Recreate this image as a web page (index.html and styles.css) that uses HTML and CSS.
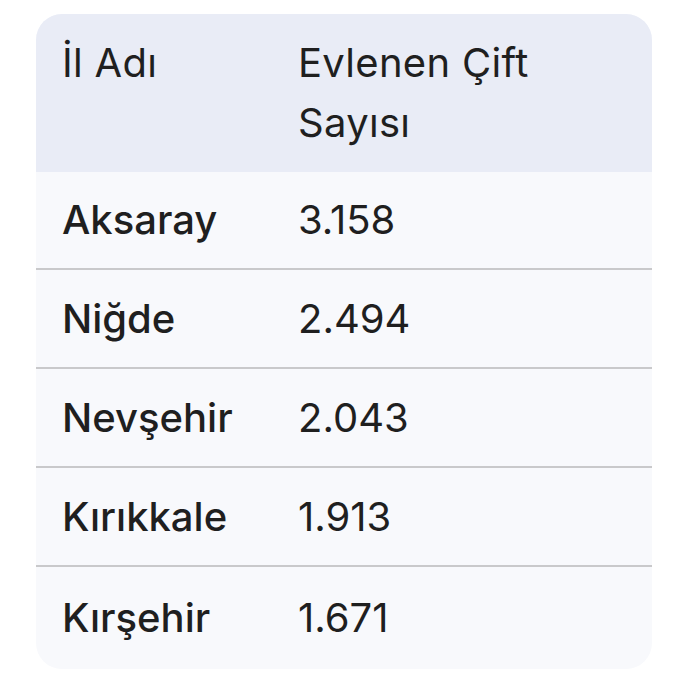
FILE: index.html
```html
<!DOCTYPE html>
<html lang="tr">
<head>
<meta charset="utf-8">
<link rel="stylesheet" href="styles.css">
</head>
<body>
<div class="card">
  <table class="data">
    <thead>
      <tr>
        <th class="c1">İl Adı</th>
        <th class="c2">Evlenen Çift Sayısı</th>
      </tr>
    </thead>
    <tbody>
      <tr><td class="c1 name">Aksaray</td><td class="c2">3.158</td></tr>
      <tr><td class="c1 name">Niğde</td><td class="c2">2.494</td></tr>
      <tr><td class="c1 name">Nevşehir</td><td class="c2">2.043</td></tr>
      <tr><td class="c1 name">Kırıkkale</td><td class="c2">1.913</td></tr>
      <tr><td class="c1 name">Kırşehir</td><td class="c2">1.671</td></tr>
    </tbody>
  </table>
</div>
</body>
</html>
```
FILE: styles.css
```css
html, body {
  margin: 0;
  padding: 0;
  background: #ffffff;
}
body {
  font-family: Inter, "Noto Sans", sans-serif;
  color: #1f1f1f;
}
.card {
  margin: 14px 48px 0 36px;
  width: 616px;
  border-radius: 26px;
  overflow: hidden;
  background: #f8f9fc;
}
.data {
  width: 100%;
  border-collapse: collapse;
  table-layout: fixed;
}
.data th {
  background: #e9ecf6;
  font-weight: 400;
  font-size: 40px;
  letter-spacing: 0.3px;
  line-height: 60px;
  text-align: left;
  vertical-align: top;
  padding: 19px 0 19px 0;
}
.data .c1 {
  width: 236px;
  padding-left: 26px;
}
.data th.c2 {
  padding-right: 60px;
}
.data td {
  font-size: 40px;
  line-height: 48px;
  height: 97px;
  padding: 0;
  vertical-align: middle;
  border-top: 2px solid #c9c9cb;
  font-weight: 400;
}
.data tbody tr:first-child td {
  border-top: none;
  height: 96px;
}
.data tbody tr:last-child td {
  height: 102px;
}
.data td.name {
  font-weight: 500;
}
```
